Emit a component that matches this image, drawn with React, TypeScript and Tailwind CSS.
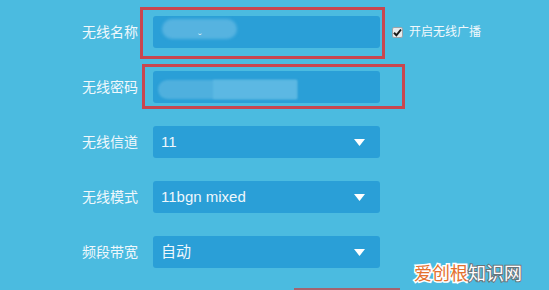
import React from "react";

const font = { fontFamily: '"Liberation Sans", "Noto Sans CJK SC", sans-serif' };

function Caret() {
  return (
    <svg width="11" height="7" viewBox="0 0 11 7" className="mr-[15px]">
      <path d="M0 0 L11 0 L5.5 7 Z" fill="#ffffff" />
    </svg>
  );
}

function Row({ label, children }: { label: string; children: React.ReactNode }) {
  return (
    <div className="flex h-8 items-center">
      <div className="w-[71px] text-[14px] text-[#f1f8fc]">{label}</div>
      {children}
    </div>
  );
}

function Select({ value }: { value: string }) {
  return (
    <div className="flex h-8 w-[227px] items-center justify-between rounded-[3px] bg-[#2a9fd7] pl-[8px] text-[15px] text-[#eef7fc]">
      <span>{value}</span>
      <Caret />
    </div>
  );
}

export default function App() {
  return (
    <div className="relative h-[290px] w-[549px] overflow-hidden bg-[#4bbbe0]" style={font}>
      <div className="flex flex-col gap-[23px] pl-[82px] pt-[16px]">
        <Row label="无线名称">
          <div className="relative h-8 w-[227px] rounded-[3px] bg-[#2a9fd7]">
            <div className="absolute left-[9px] top-[3px] h-[20px] w-[75px] rounded-[10px] bg-[#56b3e0] blur-[1.5px]" />
            <span className="absolute left-[45px] top-[14px] text-[11px] text-[#e6f4fb]">ˇ</span>
          </div>
          <label className="ml-[12px] flex items-center gap-[6px] text-[12px] text-[#f1f8fc]">
            <span className="flex h-[11px] w-[11px] items-center justify-center rounded-[2px] border border-[#9aa4aa] bg-[#e8ecee]">
              <svg width="9" height="9" viewBox="0 0 9 9">
                <path d="M1 4.8 L3.4 7.3 L8 1.5" stroke="#1a1a1a" strokeWidth="2" fill="none" />
              </svg>
            </span>
            开启无线广播
          </label>
        </Row>
        <Row label="无线密码">
          <div className="relative h-8 w-[227px] rounded-[3px] bg-[#2a9fd7]">
            <div className="absolute left-[5px] top-[9px] h-[19px] w-[139px] rounded-l-[10px] bg-[#4fb0de] blur-[1px]" />
            <div className="absolute left-[60px] top-[9px] h-[19px] w-[84px] bg-[#5cb8e3] blur-[1px]" />
          </div>
        </Row>
        <Row label="无线信道">
          <Select value="11" />
        </Row>
        <Row label="无线模式">
          <Select value="11bgn mixed" />
        </Row>
        <Row label="频段带宽">
          <Select value="自动" />
        </Row>
      </div>

      <div className="pointer-events-none absolute left-[140px] top-[7px] h-[52px] w-[245px] border-[3px] border-[#c8464f]" />
      <div className="pointer-events-none absolute left-[142px] top-[64px] h-[45px] w-[263px] border-[3px] border-[#c8464f]" />
      <div className="absolute left-[294px] top-[288px] h-[3px] w-[106px] bg-[#a4636f]" />

      <div
        className="absolute left-[414px] top-[261px] text-[18px] leading-[22px] tracking-[0px]"
        style={{ fontFamily: '"Noto Sans CJK SC", sans-serif' }}
      >
        <span className="text-[#e4712f] [-webkit-text-stroke:3px_#ffffff] [paint-order:stroke_fill]">爱创根</span>
        <span className="text-[#ffffff] [-webkit-text-stroke:2px_#6b7479] [paint-order:stroke_fill]">知识网</span>
      </div>
    </div>
  );
}
